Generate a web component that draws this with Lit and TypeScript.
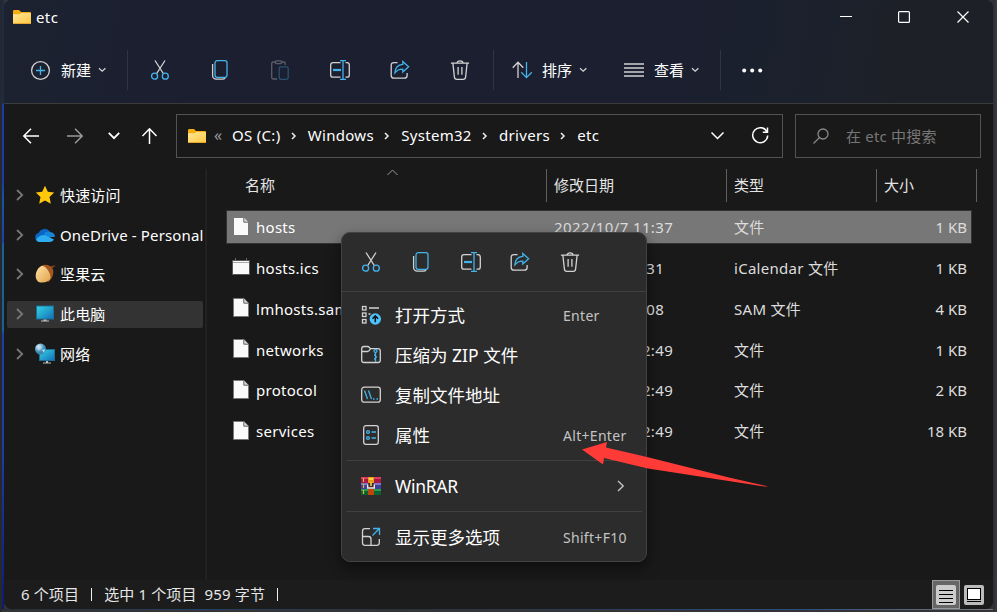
import { LitElement, html, svg, css } from "lit";
import { customElement } from "lit/decorators.js";
import { classMap } from "lit/directives/class-map.js";

const ico = (body: unknown, w = 20, h = 20, cls = "") =>
  html`<svg class="i ${cls}" width=${w} height=${h} viewBox="0 0 ${w} ${h}">${body}</svg>`;

const cut = () => ico(svg`<path d="M5 .5l8.300 13M15 .5L6.700 13.500" class="g"/><circle cx="4.600" cy="16.200" r="3" class="b"/><circle cx="15.300" cy="16.200" r="3" class="b"/>`);
const copy = () => ico(svg`<path d="M2.600 4v11.500a3.600 3.600 0 0 0 3.600 3.600H13a2.300 2.300 0 0 0 2.200-1.600" class="g"/><rect x="5" y=".7" width="12" height="16.600" rx="2.200" class="b"/>`);
const paste = () => ico(svg`<path d="M6 2H3.200Q1.700 2 1.700 3.500v14Q1.700 19 3.200 19H7M11 2h2.800q1.400 0 1.400 1.500V5" class="g"/><rect x="5.300" y=".8" width="6.400" height="2.900" rx="1.400" class="g"/><rect x="9.200" y="6.800" width="9" height="12.600" rx="1.800" class="b"/>`);
const rename = () => ico(svg`<path d="M10.500 2.600H3Q.7 2.600.7 4.900v10q0 2.300 2.300 2.300h7.500M15.500 2.600h1.500q2.300 0 2.300 2.300v10q0 2.300-2.300 2.300h-1.500" class="g"/><path d="M10 .7h6M10 19.300h6M13 .7v18.600" class="b"/><path d="M3 10h8" class="b thick"/>`);
const share = () => ico(svg`<path d="M7.500 2.600H4Q1.200 2.600 1.200 5.400v10q0 2.800 2.800 2.800h10.300q2.800 0 2.800-2.800V13" class="g"/><path d="M12.800 1.500l5.800 5.300-5.800 5.200V9.200C9.300 9.100 7 10.200 4.900 12.800c.3-4.500 2.900-8 7.900-8.400z" class="b"/>`);
const trash = () => ico(svg`<path d="M.9 3.200h18.200M7 3.200C7 .1 13 .1 13 3.200M2.900 3.400l1.500 13.700q.3 2.200 2.300 2.200h6.600q2 0 2.300-2.200l1.500-13.700M8.100 7v7.800M11.900 7v7.800" class="g"/>`);
const folder = () => ico(svg`<defs><linearGradient id="f" x2="1" y2="1"><stop stop-color="#ffe79a"/><stop offset="1" stop-color="#ffc83f"/></linearGradient></defs><path d="M0 1.200Q0 0 1.200 0H6l2 2h9q1 0 1 1v3H0z" fill="#f5ae12"/><path d="M0 4.200h6.500L8.300 3H18v10q0 1-1 1H1q-1 0-1-1z" fill="url(#f)"/><path d="M.3 13.500h17.400" stroke="#e7a72a"/>`, 18, 14);
const chev = () => ico(svg`<path d="M1 1.200l3.200 3 3.200-3" class="g"/>`, 9, 6);
const right = () => ico(svg`<path d="M1 1l5.200 5L1 11" class="s"/>`, 8, 12);
const crumb = () => ico(svg`<path d="M1 1l3 3-3 3"/>`, 6, 8, "bold");

const fileIco = () => ico(svg`<path d="M.5 .5h10.300l4.700 4.700v13.300H.5z" fill="#fafafa" stroke="#777"/><path d="M10.800 .5v4.700h4.700" fill="#d8d8d8" stroke="#666"/>`, 16, 19);
const calIco = () => ico(svg`<path d="M.5 2.500h17v14H.5z" fill="#fafafa" stroke="#555"/><path d="M1 4.500h16" stroke="#aaa"/><path d="M3.500 0v3M14.500 0v3" stroke="#666"/>`, 18, 17, "cal");

const star = () => ico(svg`<path d="M10 .8l2.800 6 6.400 .8-4.700 4.500 1.300 6.600L10 15.500l-5.800 3.200 1.300-6.600L.8 7.600l6.400-.8z" fill="#ffc80a"/>`);
const cloud = () => ico(svg`<path d="M4.500 16.500A4.300 4.300 0 0 1 3.600 8 6.500 6.500 0 0 1 15 6.700L12 13z" fill="#0a64c4"/><path d="M9 8.500a6 6 0 0 1 7-1.300 5 5 0 0 1 4 4.500l-9 1z" fill="#1686db"/><path d="M1 14.500C4 10.500 8 9 11.300 10.800L19 14.600q-1 2.400-4 2.400H4.500q-2.500 0-3.500-2.500z" fill="#2fadf2"/>`);
const nut = () => ico(svg`<defs><linearGradient id="n" x2="1" y2="1"><stop stop-color="#ffe2a4"/><stop offset="1" stop-color="#dfa24b"/></linearGradient></defs><path d="M16.500 4.500l3.500-2.500-.5-.8-4.500 1.500z" fill="#8d4a20"/><path d="M6 2C10-.5 16 1 18 5.500c1.300 5-1.500 10-5 12.500z" fill="#a4561f"/><path d="M5.500 2.500C8 1.500 10 2.500 12 5s4 6 3.500 9.500c-2 3.500-7 5-12 3.500C-1 15 0 6 5.500 2.500z" fill="url(#n)"/>`);
const pc = () => ico(svg`<defs><linearGradient id="p" x2="1" y2="1"><stop stop-color="#35d7e4"/><stop offset="1" stop-color="#126db8"/></linearGradient></defs><rect x="1.500" y="2" width="17" height="13" fill="url(#p)" stroke="#1c6e95"/><path d="M8.500 15.500h3V16.500h2.500v1H6v-1h2.500z" fill="#b8bec2"/>`);
const net = () => ico(svg`<defs><linearGradient id="q" x2="1" y2="1"><stop stop-color="#35d7e4"/><stop offset="1" stop-color="#126db8"/></linearGradient><radialGradient id="r" cx=".35" cy=".3"><stop stop-color="#e9f7ff"/><stop offset="1" stop-color="#3887b5"/></radialGradient></defs><rect x="4.500" y="5.500" width="15" height="11" fill="url(#q)" stroke="#1c6e95"/><circle cx="5.500" cy="5" r="5.500" fill="url(#r)"/><path d="M2 3l3-1 1 2-2 2zM7 6l3-1-1 4z" fill="#b7dff1"/><path d="M11 17h2v1.500h3v1H8v-1h3z" fill="#b8bec2"/>`);

const openWith = () => ico(svg`<rect x="1.500" y="1.500" width="3.500" height="3.500" class="g"/><rect x="1.500" y="8" width="3.500" height="3.500" class="g"/><rect x="1.500" y="14.500" width="3.500" height="3.500" class="g"/><path d="M8 3h10M7.500 9h2" class="g"/><circle cx="14.300" cy="14" r="5.700" fill="#4cc2ff"/><path d="M14.300 17.200V11M11.500 13.700l2.800-2.800 2.800 2.800" fill="none" stroke="#111" stroke-width="1.500"/>`);
const zip = () => ico(svg`<path d="M.7 15.200V3.800Q.7 1.500 3 1.500h3.500q1 0 1.700 .8L9.500 3.700H17q2.300 0 2.300 2.300v9.200q0 2.300-2.300 2.300H3Q.7 17.500 .7 15.200zM1 6.500h5.500q1 0 1.600-.8l1.500-2" class="g"/><circle cx="14.500" cy="6" r="1.500" class="b"/><path d="M14.500 7.500V17M13 10h1.500M14.500 12H16M13 14h1.500" class="b"/>`);
const path = () => ico(svg`<rect x=".7" y="2.200" width="18.600" height="15" rx="2.500" class="g"/><path d="M3.500 5.500l3 8.500M7.500 5.500l3 8.500M12 14h1.500M15.500 14H17" class="b"/>`);
const props = () => ico(svg`<rect x="2.700" y=".7" width="14.600" height="18.600" rx="2.200" class="g"/><circle cx="7" cy="7" r="1.400" class="b"/><circle cx="7" cy="13" r="1.400" class="b"/><path d="M10.500 7H15M10.500 13H15" class="b"/>`);
const rar = () => ico(svg`<path d="M0 1h20v6H0z" fill="#a81843"/><path d="M0 1h20v2H0z" fill="#dc3c62"/><path d="M0 7h20v6H0z" fill="#3d3f9b"/><path d="M0 7h20v2H0z" fill="#7d78ca"/><path d="M0 13h20v6H0z" fill="#0d6030"/><path d="M0 13h20v2H0z" fill="#289b50"/><path d="M2.500 2v4M2.500 8v4M2.500 14v4" stroke="#e0b43c" stroke-width="1.200"/><path d="M7 1h6v6H7z" fill="#e89a1c"/><path d="M8 2h4v2H8z" fill="#ffd04f"/><path d="M7 13h6v6H7z" fill="#b9470e"/><path d="M7 7h6v6H7z" fill="#4a2a20"/><path d="M6.700 8.500V12h6.600V8.500" fill="none" stroke="#eee" stroke-width="1.300"/><path d="M10 6v4" stroke="#f3c65a" stroke-width="1.600"/>`);
const more = () => ico(svg`<path d="M9 1.700H4Q1.500 1.700 1.500 4.200v11.600q0 2.500 2.500 2.500h11.800q2.500 0 2.500-2.500V12M1.500 9.500h6q2.500 0 2.500 2.500v6.300" class="g"/><path d="M12 1.500h6.500V8M18.200 1.800L11.500 8.500" class="b"/>`);

@customElement("app-root")
export class AppRoot extends LitElement {
  static styles = css`
    :host { display: block; width: 997px; height: 612px; overflow: hidden; position: relative;
      font: 15px/20px "Noto Sans", "Noto Sans CJK SC", sans-serif; color: #fff; }
    * { box-sizing: border-box; }
    .i { display: block; flex: none; overflow: visible; }
    .g { fill: none; stroke: #d2d2d4; stroke-width: 1.3; }
    .b { fill: none; stroke: #43b3ec; stroke-width: 1.3; }
    .thick { stroke-width: 2.2; }
    .s { fill: none; stroke: #858585; stroke-width: 1.8; }
    .w { fill: none; stroke: #fff; stroke-width: 1.5; }
    .bold { fill: none; stroke: #eee; stroke-width: 1.5; }
    .desk { height: 612px; padding: 0 4px 3px; background:
      linear-gradient(#26282c, #26282c) 0 0 / 2px 100% no-repeat,
      linear-gradient(#1b2c44 0 103px, #1a3aa4 104px 180px, #13579c 200px, #2040a8 242px, #146296 244px 330px, #1c3da4 335px 450px, #0d1b72) 2px 0 / 2px 609px no-repeat,
      linear-gradient(90deg, #2c2e36, #3c3c3c) 993px 0 / 4px 100% no-repeat,
      linear-gradient(90deg, #2a2c30, #254364 200px, #2c3038 400px, #2a4d7d 800px, #777 990px) 0 609px / 100% 1px no-repeat, #333437; }
    .win { height: 609px; background: #191919; border-radius: 8px; overflow: hidden; display: flex; flex-direction: column; }
    .head { height: 104px; border-bottom: 1px solid #3b3b3b; background: linear-gradient(100deg, #1c2230, #1b1f30 20%, #1b1f30 65%, #1b212c 82%, #1e2027 90%); }
    .title { height: 34px; display: flex; align-items: center; padding-left: 9px; }
    .title .name { margin-left: 5px; flex: 1; padding-bottom: 1px; letter-spacing: .4px; }
    .wc { display: flex; gap: 47px; padding-right: 24px; }
    .tools { display: flex; align-items: center; height: 72px; padding-left: 27px; }
    .tools .lab { margin: 0 7px 1px 11px; }
    .tools .after { margin-left: 10px; }
    .lab { white-space: pre; }
    .vs { width: 1px; height: 40px; background: #313542; }
    .vs.first { margin-left: 20px; }
    .vs.last { margin: 0 20.500px 0 20px; }
    .row40 { display: flex; gap: 40px; padding: 0 23px 0 22px; }
    .dim { opacity: .35; }
    .gap18 { width: 18px; }
    .gap36 { width: 36px; }
    .gap28 { width: 28px; }
    .nav { height: 65px; display: flex; align-items: center; padding: 0 12px 2px 19px; }
    .arrows { display: flex; align-items: center; width: 153px; }
    .arrows .i:nth-child(2) { margin-left: 28px; }
    .arrows .i:nth-child(3) { margin-left: 25px; }
    .arrows .i:nth-child(4) { margin-left: 22px; }
    .grey { stroke: #999; }
    .h18 { stroke-width: 1.8; }
    .h12 { stroke-width: 1.2; }
    .h10 { stroke-width: 1; }
    .addr { height: 44px; width: 607px; border: 1px solid #535353; display: flex; align-items: center; padding: 0 13px 0 11px; }
    .addr .lab { padding-bottom: 1px; letter-spacing: .3px; }
    .dbl { color: #999; width: 26px; padding-left: 8px; font-size: 16px; padding-bottom: 2px; }
    .addr .bold { margin: 0 10.800px 0 10.500px; }
    .fill { flex: 1; }
    .search { height: 44px; width: 186px; margin-left: 12px; border: 1px solid #535353; display: flex; align-items: center; padding-left: 17px; color: #777; gap: 17px; letter-spacing: .2px; }
    .mag { fill: none; stroke: #888; stroke-width: 1.300; }
    .body { flex: 1; display: flex; min-height: 0; }
    .side { width: 200px; padding: 12.500px 1px 0 3px; }
    .si { height: 27px; margin-bottom: 12.700px; display: flex; align-items: center; padding-left: 9px; white-space: nowrap; border-radius: 2px; }
    .si .lab { margin-left: 5px; letter-spacing: .15px; }
    .si .s { stroke: #777; }
    .si .i:nth-child(2) { margin-left: 11px; }
    .si.on { background: #333; }
    .div { width: 4px; background: #222; border-left: 1px solid #161616; border-right: 1px solid #191919; }
    .main { flex: 1; padding-left: 19px; }
    .cols { display: grid; grid-template-columns: 320px 180px 150px 100px; height: 33px; position: relative; color: #e4e4e4; }
    .cols > div { border-right: 1px solid #606060; padding: 6px 0 0 7px; }
    .cols > div:first-child { padding-left: 18px; }
    .up { position: absolute; left: 160px; top: 0; }
    .up path { stroke: #999; fill: none; }
    .list { padding-top: 4.700px; margin-left: -1px; }
    .fr { width: 746px; height: 34px; margin: 3px 0 6.800px; display: grid; grid-template-columns: 23px 298px 180px 150px 1fr; align-items: center; padding: 1px 5px 0 7px; letter-spacing: .28px; }
    .fr .i { margin-bottom: 2px; }
    .fr .cal { margin-left: -1px; }
    .fr .d { color: #ddd; }
    .fr .date { letter-spacing: .38px; }
    .fr .r { text-align: right; letter-spacing: 0; }
    .fr.on { background: #777; outline: 1px solid #333; outline-offset: -1px; }
    .stat { height: 29px; background: #1c1c1c; display: flex; align-items: center; padding: 0 9px 0 17px; color: #e6e6e6; letter-spacing: .13px; }
    .stat > .t { padding-bottom: 1px; white-space: pre; }
    .stat .bar { width: 1px; height: 13px; background: #eee; margin: 0 12px; }
    .stat .v1 { width: 28px; height: 29px; background: #666; border: 1px solid #999; display: grid; place-items: center; margin-right: 4px; }
    .menu { position: absolute; left: 341px; top: 232px; width: 306px; height: 330px; background: #2c2c2c; border: 1px solid #424242; border-radius: 9px; box-shadow: 0 6px 14px rgba(0,0,0,.45); font-size: 17.500px; }
    .acts { height: 58.500px; border-bottom: 1px solid #404040; display: flex; gap: 29.750px; padding: 19px 0 0 19px; }
    .grp { padding: 3px 0 5px; }
    .mi { height: 40px; display: flex; align-items: center; padding-left: 19px; }
    .mi .lab { margin-left: 14px; width: 168px; }
    .mi .k { font-size: 14px; color: #c4c4c4; white-space: pre; letter-spacing: .3px; padding-top: 2px; }
    .mi .s { stroke: #c4c4c4; stroke-width: 1.400; }
    .one { height: 51px; margin: 0 4px; border-top: 1px solid #404040; display: flex; align-items: center; }
    .one .mi { padding-left: 15px; }
    .one .latin { letter-spacing: -.3px; }
    .one .sub { margin-left: 54px; }
    .arrow { position: absolute; left: 580px; top: 440px; }
  `;

  crumbs = ["OS (C:)", "Windows", "System32", "drivers", "etc"];
  side: [() => unknown, string][] = [[star, "快速访问"], [cloud, "OneDrive - Personal"], [nut, "坚果云"], [pc, "此电脑"], [net, "网络"]];
  files = [
    ["hosts", "2022/10/7 11:37", "文件", "1 KB"],
    ["hosts.ics", "2022/5/7 11:31", "iCalendar 文件", "1 KB"],
    ["lmhosts.sam", "2021/6/5 20:08", "SAM 文件", "4 KB"],
    ["networks", "2021/10/8 12:49", "文件", "1 KB"],
    ["protocol", "2021/10/8 12:49", "文件", "2 KB"],
    ["services", "2021/10/8 12:49", "文件", "18 KB"],
  ];
  items: [() => unknown, string, string][] = [[openWith, "打开方式", "Enter"], [zip, "压缩为 ZIP 文件", ""], [path, "复制文件地址", ""], [props, "属性", "Alt+Enter"]];

  render() {
    return html`<div class="desk"><div class="win">
      <div class="head">
        <div class="title">${folder()}<span class="name">etc</span>
          <div class="wc">
            ${ico(svg`<path d="M1 5.500h12" class="w h10"/>`, 12, 12)}
            ${ico(svg`<rect x=".6" y=".6" width="10.800" height="10.800" rx="1" class="w h12"/>`, 12, 12)}
            ${ico(svg`<path d="M.5 .5l11 11M11.500 .5l-11 11" class="w h12"/>`, 12, 12)}
          </div>
        </div>
        <div class="tools">
          ${ico(svg`<circle cx="9.500" cy="9.500" r="8.900" class="g"/><path d="M9.500 5v9M5 9.500h9" class="b"/>`, 19, 19)}
          <span class="lab">新建</span>${chev()}
          <span class="vs first"></span>
          <div class="row40">${cut()}${copy()}<span class="dim">${paste()}</span>${rename()}${share()}${trash()}</div>
          <span class="vs"></span>
          <span class="gap18"></span>
          ${ico(svg`<path d="M6 18V2.500M.7 7.800L6 2.300l5.300 5.500" class="g"/><path d="M14.500 2v15.500M9.300 12.300l5.200 5.300 5.300-5.300" class="b"/>`)}
          <span class="lab after">排序</span>${chev()}
          <span class="gap36"></span>
          ${ico(svg`<path d="M0 4h20M0 8h20M0 12h20M0 16h20" class="g"/>`)}
          <span class="lab after">查看</span>${chev()}
          <span class="vs last"></span>
          ${ico(svg`<circle cx="2.200" cy="2.500" r="2" fill="#fff"/><circle cx="10.200" cy="2.500" r="2" fill="#fff"/><circle cx="18.200" cy="2.500" r="2" fill="#fff"/>`, 21, 5)}
        </div>
      </div>
      <div class="nav">
        <div class="arrows">
          ${ico(svg`<path d="M16 8H.8M8 .8L.8 8 8 15.200" class="w"/>`, 16, 16)}
          ${ico(svg`<path d="M0 8h15.200M8 .8L15.200 8 8 15.200" class="w grey"/>`, 16, 16)}
          ${ico(svg`<path d="M.8 .8L6 6.200 11.200 .8" class="w h18"/>`, 12, 7)}
          ${ico(svg`<path d="M7.500 16V.8M.5 8l7-7.200 7 7.200" class="w"/>`, 15, 16)}
        </div>
        <div class="addr">${folder()}<span class="dbl">«</span>
          ${this.crumbs.map((c, i) => html`${i ? crumb() : ""}<span class="lab">${c}</span>`)}
          <span class="fill"></span>
          ${ico(svg`<path d="M.5 .5L6.500 6.500l6-6" class="w"/>`, 13, 7)}
          <span class="gap28"></span>
          ${ico(svg`<path d="M15 5A7.500 7.500 0 1 0 15.700 8.500M15.500 .5v4.700h-4.700" class="w"/>`, 17, 17)}
        </div>
        <div class="search">${ico(svg`<circle cx="10" cy="6" r="5" class="mag"/><path d="M6.500 9.500L.5 15.500" class="mag"/>`, 16, 16)}<span class="lab">在 etc 中搜索</span></div>
      </div>
      <div class="body">
        <div class="side">${this.side.map(([ic, t], i) => html`<div class=${classMap({ si: true, on: i === 3 })}>${right()}${ic()}<span class="lab">${t}</span></div>`)}</div>
        <div class="div"></div>
        <div class="main">
          <div class="cols">${["名称", "修改日期", "类型", "大小"].map(t => html`<div>${t}</div>`)}
            <span class="up">${ico(svg`<path d="M.5 6L5.500 1l5 5"/>`, 11, 7)}</span>
          </div>
          <div class="list">${this.files.map((f, i) => html`<div class=${classMap({ fr: true, on: i === 0 })}>
            ${i === 1 ? calIco() : fileIco()}<span>${f[0]}</span><span class="d date">${f[1]}</span><span class="d">${f[2]}</span><span class="d r">${f[3]}</span></div>`)}</div>
        </div>
      </div>
      <div class="stat"><span class="t">6 个项目</span><span class="bar"></span><span class="t">选中 1 个项目  959 字节</span><span class="bar"></span><span class="fill"></span>
        <span class="v1">${ico(svg`<rect width="20" height="20" rx="2" fill="#ccc"/><path d="M3 5.500h14M3 9.500h14M3 13.500h14M3 17.500h14" stroke="#000"/>`)}</span>
        ${ico(svg`<rect width="20" height="20" rx="2" fill="#bbb"/><rect x="3.500" y="3.500" width="13" height="11" fill="#fff" stroke="#000"/><path d="M3 16.500h14" stroke="#000"/>`)}
      </div>
    </div></div>
    <div class="menu">
      <div class="acts">${cut()}${copy()}${rename()}${share()}${trash()}</div>
      <div class="grp">${this.items.map(([ic, t, k]) => html`<div class="mi">${ic()}<span class="lab">${t}</span><span class="k">${k}</span></div>`)}</div>
      <div class="one"><div class="mi">${rar()}<span class="lab latin">WinRAR</span><span class="sub">${right()}</span></div></div>
      <div class="one"><div class="mi">${more()}<span class="lab">显示更多选项</span><span class="k">Shift+F10</span></div></div>
    </div>
    <svg class="arrow" width="190" height="50" viewBox="0 0 190 50"><path d="M2 9.500L27 2l-1 5.500L67 17l82 20.500 39.500 9q-8 0-14-1.500L68 28.500 24 18l-1 6.500z" fill="#ff3b38"/></svg>`;
  }
}
